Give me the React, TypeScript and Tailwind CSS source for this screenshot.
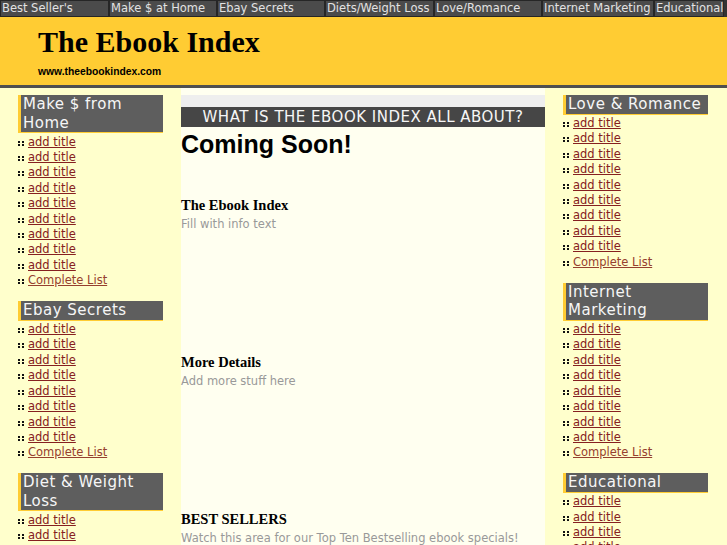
const navItems = [
  { label: "Best Seller's", w: 'w-[109px]' },
  { label: 'Make $ at Home', w: 'w-[108px]' },
  { label: 'Ebay Secrets', w: 'w-[108px]' },
  { label: 'Diets/Weight Loss', w: 'w-[109px]' },
  { label: 'Love/Romance', w: 'w-[108px]' },
  { label: 'Internet Marketing', w: 'w-[112px]' },
  { label: 'Educational', w: 'w-[70px]' },
];

const leftBoxes = [
  { title: 'Make $ from Home', count: 9 },
  { title: 'Ebay Secrets', count: 8 },
  { title: 'Diet & Weight Loss', count: 8 },
];

const rightBoxes = [
  { title: 'Love & Romance', count: 9 },
  { title: 'Internet Marketing', count: 8 },
  { title: 'Educational', count: 8 },
];

function Bullet() {
  return (
    <svg width="6" height="5" viewBox="0 0 6 5" className="mr-[4px] mt-[6px] shrink-0">
      <rect x="0" y="0" width="2" height="2" fill="#111" />
      <rect x="4" y="0" width="2" height="2" fill="#111" />
      <rect x="0" y="3" width="2" height="2" fill="#111" />
      <rect x="4" y="3" width="2" height="2" fill="#111" />
    </svg>
  );
}

function SideBox({ title, count, first }: { title: string; count: number; first?: boolean }) {
  return (
    <div className={first ? '' : 'mt-[12.5px]'}>
      <div className="bg-[#5e5e5e] border-l-[3px] border-b border-[#ffcc33] pl-[2px] text-[15px] leading-[18.5px] tracking-[0.5px] text-[#f6f6f6]">
        {title}
      </div>
      <ul className="pt-[1.5px] text-[11.5px] leading-[15.4px]">
        {Array.from({ length: count }).map((_, i) => (
          <li key={i} className="flex items-start">
            <Bullet />
            <a href="#" className="text-[#862020] underline">
              add title
            </a>
          </li>
        ))}
        <li className="flex items-start">
          <Bullet />
          <a href="#" className="text-[#96402f] underline">
            Complete List
          </a>
        </li>
      </ul>
    </div>
  );
}

function Section({ title, text, gap }: { title: string; text: string; gap: string }) {
  return (
    <div className={gap}>
      <h3 className="font-['Liberation_Serif',serif] font-bold text-[14.5px] leading-[17px] text-black">
        {title}
      </h3>
      <p className="mt-[3px] text-[11.5px] leading-[15px] text-[#999999]">{text}</p>
    </div>
  );
}

export default function App() {
  return (
    <div className="w-[727px] h-[545px] overflow-hidden bg-[#ffffcc] font-['DejaVu_Sans',sans-serif]">
      {/* top nav */}
      <div className="flex h-[17px] bg-[#333333]">
        {navItems.map(item => (
          <div
            key={item.label}
            className={`${item.w} h-[17px] bg-[#4b4b4b] border border-[#262626] pl-[1px] text-[11.5px] leading-[15px] text-[#e2e2e2] whitespace-nowrap`}
          >
            {item.label}
          </div>
        ))}
      </div>

      {/* banner */}
      <div className="h-[68px] bg-[#ffcc33] pl-[38px] pt-[8px]">
        <h1 className="font-['Liberation_Serif',serif] font-bold text-[30px] leading-[34px] text-black">
          The Ebook Index
        </h1>
        <div className="mt-[7px] font-['Liberation_Sans',sans-serif] font-bold text-[10.3px] leading-[12px] text-black">
          www.theebookindex.com
        </div>
      </div>
      <div className="h-[3px] bg-[#4f4f4f]" />

      {/* body */}
      <div className="flex pl-[18px]">
        <div className="w-[145px] pt-[7px]">
          {leftBoxes.map((b, i) => (
            <SideBox key={b.title} title={b.title} count={b.count} first={i === 0} />
          ))}
        </div>

        <div className="ml-[18px] w-[364px] h-[460px] bg-[#fffff0] pt-[7px]">
          <div className="h-[12px] bg-[#eeeeee]" />
          <div className="h-[20px] bg-[#464646] text-center text-[15px] leading-[20px] tracking-[0.5px] text-[#f6f6f6] uppercase">
            What is the Ebook Index all about?
          </div>
          <h2 className="mt-[3px] font-['Liberation_Sans',sans-serif] font-bold text-[25px] leading-[28px] text-black">
            Coming Soon!
          </h2>
          <Section gap="mt-[39px]" title="The Ebook Index" text="Fill with info text" />
          <Section gap="mt-[122px]" title="More Details" text="Add more stuff here" />
          <Section
            gap="mt-[122px]"
            title="BEST SELLERS"
            text="Watch this area for our Top Ten Bestselling ebook specials!"
          />
        </div>

        <div className="ml-[18px] w-[145px] pt-[7px]">
          {rightBoxes.map((b, i) => (
            <SideBox key={b.title} title={b.title} count={b.count} first={i === 0} />
          ))}
        </div>
      </div>
    </div>
  );
}
